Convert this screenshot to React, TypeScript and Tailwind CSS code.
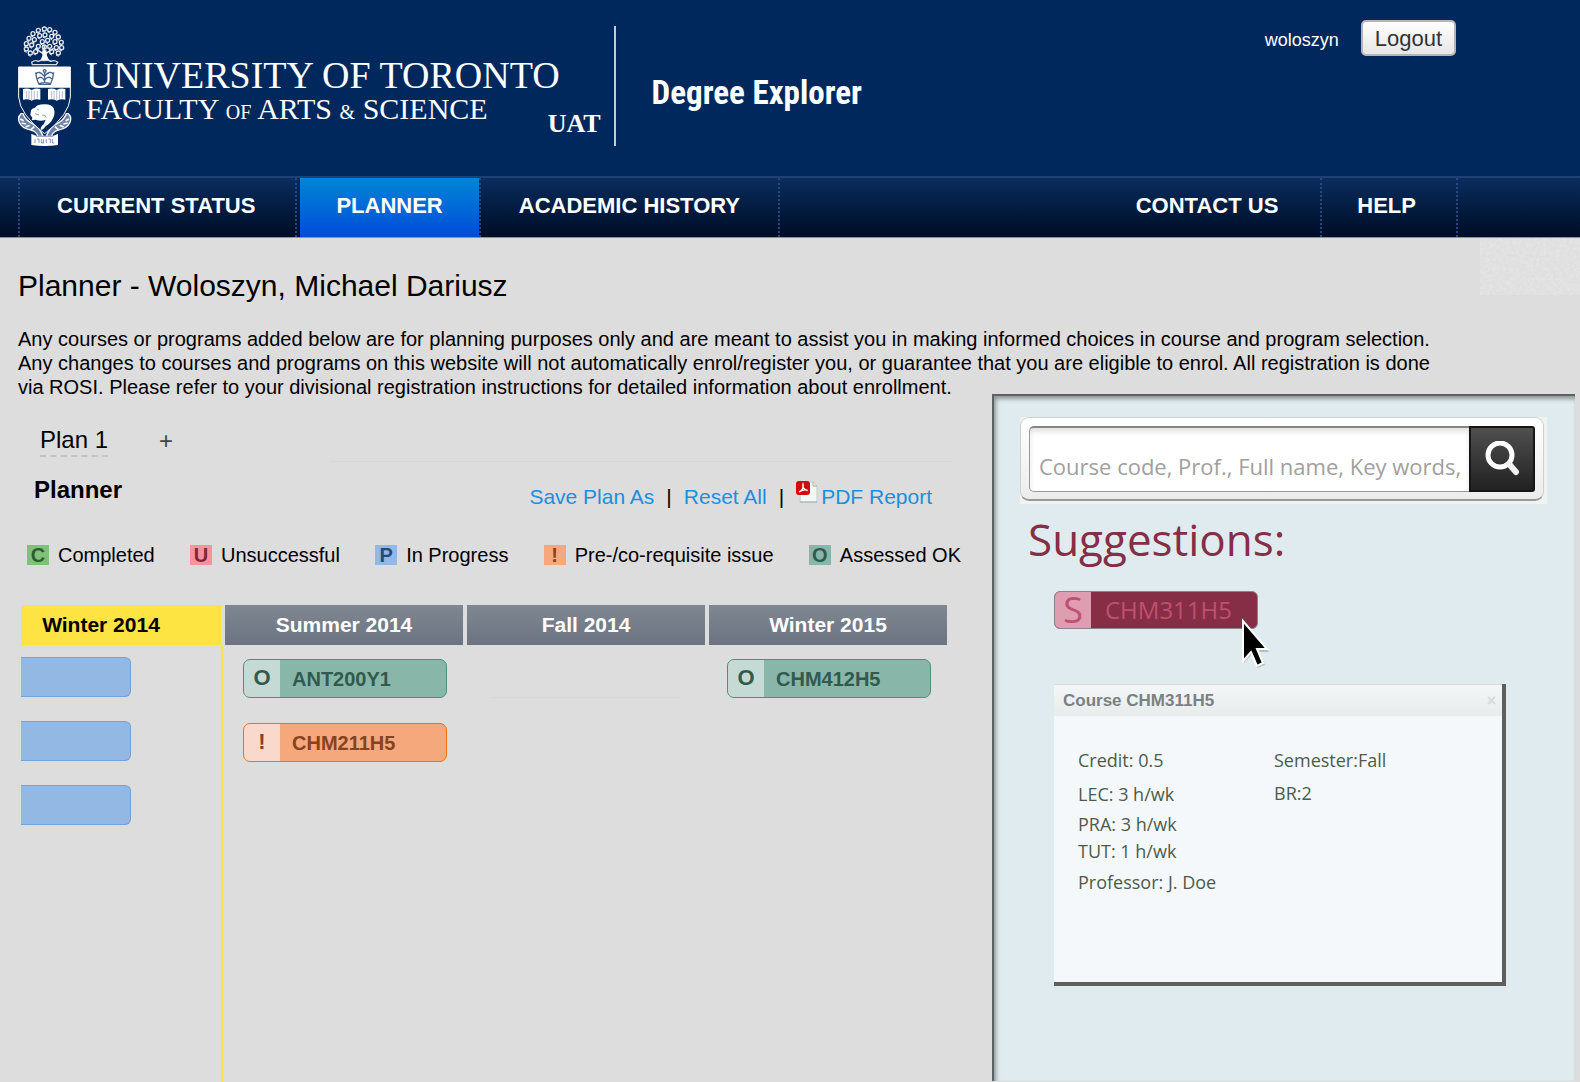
import React from "react";

const leaves: [number, number][] = [
  [82, 12], [64, 16], [48, 26], [36, 40], [28, 56], [28, 72], [40, 84], [56, 80],
  [52, 44], [68, 32], [84, 30], [76, 50], [92, 46], [104, 34], [98, 14], [114, 22],
  [124, 36], [114, 50], [133, 52], [134, 68], [118, 68], [124, 84], [104, 80], [44, 60],
  [64, 64], [98, 64], [82, 66],
];

function Crest() {
  return (
    <svg viewBox="0 0 165 366" className="h-[122px] w-[55px] shrink-0" aria-hidden="true">
      <g stroke="#e4e8ef" fill="none">
        {leaves.map(([x, y]) => (
          <g key={`${x}-${y}`}>
            <circle cx={x} cy={y} r="6" strokeWidth="4" />
            <path d={`M${x - 7} ${y + 6}l8 4`} strokeWidth="3" />
          </g>
        ))}
        <path d="M82 60V100M82 88L54 70M82 88L110 70" strokeWidth="5" />
      </g>
      <path d="M76 76h12l2 16q3 12 14 18H64q10-6 12-18z" fill="#fff" />
      <path
        d="M44 112q10-8 20-3 10-4 18-2 10-3 20 2 10-5 20 3l-4 7H46z"
        fill="#00285c"
        stroke="#d5dbe5"
        strokeWidth="4"
      />
      <path d="M12 266Q0 276 8 294q8 16 30 20l12 4q10 6 14 18l14-2Q68 306 46 296q-22-12-28-30z" fill="#6f83a4" stroke="#fff" strokeWidth="4" />
      <path d="M154 266q12 10 4 28-8 16-30 20l-12 4q-10 6-14 18l-14-2q10-28 32-38 22-12 28-30z" fill="#6f83a4" stroke="#fff" strokeWidth="4" />
      <path
        d="M10 282l10 5M14 294l13 3M26 306l12-5M42 314l10-9M156 282l-10 5M152 294l-13 3M140 306l-12-5M124 314l-10-9"
        stroke="#fff"
        strokeWidth="5"
      />
      <path d="M5 126H160V216Q158 268 83 326 8 268 5 216z" fill="#00285c" stroke="#fff" strokeWidth="3" />
      <path d="M5 126H160V188H5z" fill="#fff" />
      <g fill="none" stroke="#4a6590" strokeWidth="4">
        <path d="M56 142q2 22 10 36h34q8-14 10-36M66 176q17-6 34 0M56 148q10-14 26 6 16-20 28-6M83 140v34M62 162q10-12 20 4 12-16 22-4" />
        <circle cx="83" cy="138" r="4" />
      </g>
      <g fill="#fff">
        <path d="M18 192q14-4 26 3 12-7 26-3v32q-14-4-26 3-12-7-26-3z" />
        <path d="M93 192q14-4 26 3 12-7 26-3v32q-14-4-26 3-12-7-26-3z" />
        <path d="M42 256q2-6 12-8 8-10 26-10 22-2 30 12 6 16-2 30-6 14-22 24-8 12-14 10-4-6 8-16l6-14q-14 6-30 0l-12 2 2-8-6-8z" />
      </g>
      <path
        d="M44 194v30M119 194v30M29 198v22M36 198v24M52 198v24M61 198v22M104 198v22M111 198v24M127 198v24M136 198v22"
        stroke="#8c9dba"
        strokeWidth="2"
      />
      <path d="M54 266l12 4M60 252l6 3M76 270q10-2 12 8" fill="none" stroke="#8c9dba" strokeWidth="3" />
      <path d="M43 326l14 6h52l14-6v34q-40 6-80 0z" fill="#fff" />
      <path
        d="M54 342v12M60 342h6v12M74 342v12h6v-12M88 342v12M94 342h6v12M106 342v12h6"
        fill="none"
        stroke="#4a6590"
        strokeWidth="2"
      />
      <path d="M57 334h52" stroke="#4a6590" strokeWidth="2" />
    </svg>
  );
}

function NavLink({ label, className }: { label: string; className: string }) {
  return (
    <a href="#" className={`flex items-center pb-1 text-[22px] font-bold whitespace-nowrap text-white ${className}`}>
      {label}
    </a>
  );
}

const legend = [
  { letter: "C", label: "Completed", box: "bg-[#80c17a] text-[#2c5c33]" },
  { letter: "U", label: "Unsuccessful", box: "bg-[#f8929c] text-[#7c2933]" },
  { letter: "P", label: "In Progress", box: "bg-[#94b8e4] text-[#264a7c]" },
  { letter: "!", label: "Pre-/co-requisite issue", box: "bg-[#f5a87c] text-[#87421f]" },
  { letter: "O", label: "Assessed OK", box: "bg-[#88b7a9] text-[#315a4f]" },
];

type CourseProps = { mark: string; code: string; tone: "ok" | "issue" };

function Course({ mark, code, tone }: CourseProps) {
  const ok = tone === "ok";
  return (
    <button
      type="button"
      className={`flex h-[39px] w-[204px] rounded-[7px] border text-left text-xl font-bold ${
        ok ? "border-[#4c9079] bg-[#88b7a9] text-[#315a4f]" : "border-[#e8751c] bg-[#f5a87c] text-[#87421f]"
      }`}
    >
      <span
        className={`flex h-full w-9 items-center justify-center rounded-l-[6px] text-[22px] ${
          ok ? "bg-[#c5dad4]" : "bg-[#f8d9cb]"
        }`}
      >
        {mark}
      </span>
      <span className="flex h-full items-center pl-3">{code}</span>
    </button>
  );
}

const termHead = "h-10 bg-linear-to-b from-[#7f8792] to-[#6c7482] text-center text-[21px] font-bold text-white";

export default function App() {
  return (
    <div className="flex min-h-screen flex-col bg-[#dddddd] font-['Liberation_Sans',Arial,sans-serif] text-black">
      <header className="flex h-44 items-start bg-[#00285c] text-white">
        <div className="flex pt-[25px] pl-[17px]">
          <Crest />
          <div className="pt-[30px] pl-[14px] font-['Liberation_Serif',serif] whitespace-nowrap">
            <p className="text-[38px] leading-[40px]">UNIVERSITY OF TORONTO</p>
            <p className="text-[30px] leading-[28px]">
              FACULTY <span className="text-xl">OF</span> ARTS <span className="text-xl">&amp;</span> SCIENCE
            </p>
          </div>
          <p className="-ml-3 self-end pr-[13px] pb-2 font-['Liberation_Serif',serif] text-[26px] leading-[30px] font-bold">
            UAT
          </p>
          <div className="mt-px h-[120px] w-[2px] bg-[#c3cad8]" />
          <h1 className="mt-[48px] ml-[36px] font-['Roboto_Condensed','Roboto',sans-serif] text-[33px] leading-[40px] font-bold whitespace-nowrap">
            Degree Explorer
          </h1>
        </div>
        <div className="mt-5 mr-[124px] ml-auto flex items-center gap-[22px]">
          <span className="pt-1 text-lg leading-6 font-medium">woloszyn</span>
          <button
            type="button"
            className="h-9 rounded-[5px] border-2 border-[#b5b5b5] bg-linear-to-b from-white to-[#e6e6e6] px-3 pt-px text-[22px] leading-8 text-[#333]"
          >
            Logout
          </button>
        </div>
      </header>

      <nav className="flex h-[62px] items-stretch border-t-2 border-b border-t-[#1f4075] border-b-[#8b929c] bg-linear-to-b from-[#0b2d5e] to-[#000d26] pl-[18px]">
        <NavLink label="CURRENT STATUS" className="border-x-2 border-dotted border-[#264a80] pr-10 pl-[37px]" />
        <NavLink label="PLANNER" className="ml-[3px] bg-linear-to-b from-[#0284d6] to-[#004bd8] px-9" />
        <NavLink label="ACADEMIC HISTORY" className="border-x-2 border-dotted border-[#264a80] px-[38px]" />
        <NavLink label="CONTACT US" className="ml-auto border-r-2 border-dotted border-[#264a80] pr-[42px]" />
        <NavLink label="HELP" className="mr-[122px] border-r-2 border-dotted border-[#264a80] pr-10 pl-[35px]" />
      </nav>

      <div className="flex items-start justify-between">
        <h2 className="pt-[30px] pl-[18px] text-[30px] leading-[36px]">Planner - Woloszyn, Michael Dariusz</h2>
        <svg className="h-[57px] w-[100px] bg-[#dfdfdf]" aria-hidden="true">
          <filter id="grain" colorInterpolationFilters="sRGB">
            <feTurbulence type="fractalNoise" baseFrequency="0.3" numOctaves="2" />
            <feColorMatrix values="0 0 0 0 0.9  0 0 0 0 0.9  0 0 0 0 0.9  2 0 0 0 -0.7" />
          </filter>
          <rect width="100" height="57" filter="url(#grain)" />
        </svg>
      </div>
      <p className="mt-[23px] pl-[18px] text-xl leading-6 whitespace-nowrap">
        Any courses or programs added below are for planning purposes only and are meant to assist you in making
        informed choices in course and program selection.
        <br />
        Any changes to courses and programs on this website will not automatically enrol/register you, or guarantee
        that you are eligible to enrol. All registration is done
        <br />
        via ROSI. Please refer to your divisional registration instructions for detailed information about enrollment.
      </p>

      <div className="mr-[5px] grid flex-1 grid-cols-[992fr_583fr] items-stretch">
        <main className="min-w-0">
          <div className="flex items-start pt-[26px] pl-10 text-2xl leading-[30px]">
            <button type="button" className="border-b-2 border-dashed border-[#c3c3c3]">
              Plan 1
            </button>
            <button type="button" aria-label="Add plan" className="ml-[51px] pt-px text-[#444]">
              +
            </button>
          </div>
          <div className="mt-1 mr-10 ml-[330px] h-px bg-[#d6d6d6]" />
          <div className="flex items-start justify-between pt-[14px] pr-[60px] pl-[34px]">
            <h3 className="text-2xl leading-7 font-bold">Planner</h3>
            <div className="flex pt-2 text-[21px] leading-[26px] text-[#1b8fe0]">
              <a href="#">Save Plan As</a>
              <span className="px-3 text-black">|</span>
              <a href="#">Reset All</a>
              <span className="px-3 text-black">|</span>
              <a href="#" className="flex">
                <svg viewBox="0 0 22 24" className="-mt-1 mr-[3px] h-6 w-[22px]" aria-hidden="true">
                  <path d="M5 2h12l4 4v16H4z" fill="#f3f8f6" stroke="#c3cfcd" />
                  <path d="M17 2v4h4M4 22h17" fill="none" stroke="#9db0ae" />
                  <rect x="0" y="1" width="14" height="14" rx="3" fill="#d40a0a" />
                  <path
                    d="M3 12c3-1 5-5 4-8-1 3 1 6 4.500 6.500C9 9 6 10 3 12z"
                    fill="none"
                    stroke="#fff"
                    strokeWidth="1.300"
                  />
                </svg>
                PDF Report
              </a>
            </div>
          </div>
          <ul className="mt-[33px] mr-[31px] ml-[27px] flex justify-between text-xl leading-6 whitespace-nowrap">
            {legend.map((item) => (
              <li key={item.label} className="flex items-center gap-[9px]">
                <span className={`flex h-5 w-[22px] items-center justify-center font-bold ${item.box}`}>
                  {item.letter}
                </span>
                {item.label}
              </li>
            ))}
          </ul>

          <div className="mt-[38px] pr-[41px] pl-[17px]">
            <table className="w-full table-fixed border-separate border-spacing-x-1 border-spacing-y-0">
              <thead>
                <tr>
                  <th className="h-10 w-[200px] bg-[#fde443] pr-10 text-center text-[21px] font-bold">Winter 2014</th>
                  <th className={termHead}>Summer 2014</th>
                  <th className={termHead}>Fall 2014</th>
                  <th className={termHead}>Winter 2015</th>
                </tr>
              </thead>
              <tbody>
                <tr className="h-[436px] align-top">
                  <td className="relative pt-3 after:absolute after:top-px after:-right-[2px] after:h-full after:w-[2px] after:bg-[#fde443]">
                    <div className="flex flex-col gap-6">
                      {[1, 2, 3].map((n) => (
                        <button
                          key={n}
                          type="button"
                          aria-label={`Winter 2014 course ${n}`}
                          className="h-10 w-[110px] rounded-r-[6px] border border-l-0 border-[#72a2dc] bg-[#94b8e4]"
                        />
                      ))}
                    </div>
                  </td>
                  <td className="pt-[14px] pl-[18px]">
                    <div className="flex flex-col gap-[25px]">
                      <Course mark="O" code="ANT200Y1" tone="ok" />
                      <Course mark="!" code="CHM211H5" tone="issue" />
                    </div>
                  </td>
                  <td className="px-6 pt-[52px]">
                    <div className="h-px bg-[#d8d8d8]" />
                  </td>
                  <td className="pt-[14px] pl-[18px]">
                    <Course mark="O" code="CHM412H5" tone="ok" />
                  </td>
                </tr>
              </tbody>
            </table>
          </div>
        </main>

        <aside className="-mt-[5px] mb-px min-w-0 border-t-2 border-l-2 border-[#5c6164] bg-[#e0ebf0] pt-[21px] pr-7 pl-[26px] font-['Open_Sans',sans-serif] shadow-[inset_2px_3px_4px_#8d9699]">
          <form className="bg-[#f1f3f3] pr-[3px] pb-[3px]" onSubmit={(e) => e.preventDefault()}>
            <div className="flex h-[84px] rounded-[9px] border border-b-2 border-[#cfcfcf] border-b-[#999] bg-linear-to-b from-white to-[#ececec] p-2">
              <input
                type="text"
                aria-label="Search courses"
                placeholder="Course code, Prof., Full name, Key words,"
                className="h-[66px] min-w-0 flex-1 rounded-l-[5px] border border-t-2 border-r-0 border-[#999] border-t-[#858585] bg-white pt-3 pl-[9px] text-[22px] shadow-[inset_0_4px_5px_#e4e4e4] placeholder:text-[#a0a0a0] placeholder:opacity-100"
              />
              <button
                type="submit"
                aria-label="Search"
                className="flex h-[66px] w-[66px] items-center justify-center rounded-r-[3px] border-2 border-[#161616] bg-linear-to-b from-[#505050] to-[#222]"
              >
                <svg viewBox="0 0 36 36" className="h-9 w-9" fill="none" aria-hidden="true">
                  <circle cx="16" cy="14" r="12" stroke="#fff" strokeWidth="5" />
                  <path d="M25 23l7 8" stroke="#f1f1f1" strokeWidth="6" strokeLinecap="round" />
                </svg>
              </button>
            </div>
          </form>

          <h2 className="mt-[5px] ml-[8px] text-[44px] leading-[60px] font-medium text-[#862e46]">Suggestions:</h2>

          <div className="relative mt-[22px] ml-[34px] w-[204px]">
            <button
              type="button"
              className="flex h-[38px] w-full items-center rounded-[6px] border border-[#8c8489] bg-[#862e46] text-[#c0506f]"
            >
              <span className="flex h-full w-9 items-center justify-center rounded-l-[5px] bg-[#de9db0] text-4xl leading-9">
                S
              </span>
              <span className="pl-[14px] text-2xl leading-9">CHM311H5</span>
            </button>
            <svg viewBox="0 0 28 52" className="absolute top-[26px] left-[187px] h-[52px] w-7" aria-hidden="true">
              <path d="M3 5V46L11 37 16 51 24 48 18 35H28z" fill="#00000030" />
              <path d="M2 4V44L10 35 16 49 22 46 16 32H26z" fill="#000" stroke="#fff" strokeWidth="2" />
            </svg>
          </div>

          <section className="mt-[55px] mr-[41px] ml-[34px] h-[302px] border-r-4 border-b-4 border-[#5b5f60] bg-[#f4f8fb] text-lg leading-6 font-medium text-[#4b5c4c]">
            <div className="flex h-[32px] items-center justify-between border-t border-[#d5dadb] bg-linear-to-b from-[#f4f7f7] to-[#e7ebec] pr-[6px] pl-[9px] font-['Liberation_Sans',sans-serif]">
              <h3 className="text-[17px] leading-5 font-bold text-[#7b8182]">Course CHM311H5</h3>
              <button type="button" aria-label="Close" className="text-base leading-5 font-bold text-[#d5d9da]">
                ×
              </button>
            </div>
            <div className="grid grid-cols-[196px_1fr] pt-8 pl-6">
              <ul>
                <li>Credit: 0.5</li>
                <li className="mt-[10px]">LEC: 3 h/wk</li>
                <li className="mt-[6px]">PRA: 3 h/wk</li>
                <li className="mt-[3px]">TUT: 1 h/wk</li>
                <li className="mt-[7px]">Professor: J. Doe</li>
              </ul>
              <ul>
                <li>Semester:Fall</li>
                <li className="mt-[9px]">BR:2</li>
              </ul>
            </div>
          </section>
        </aside>
      </div>
    </div>
  );
}
